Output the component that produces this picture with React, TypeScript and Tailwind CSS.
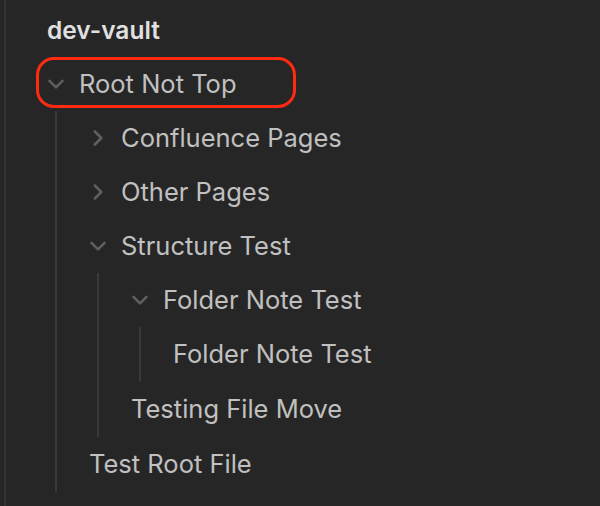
import React from "react";

type Node = {
  name: string;
  open?: boolean;
  highlight?: boolean;
  children?: Node[];
};

const tree: Node = {
  name: "Root Not Top",
  open: true,
  highlight: true,
  children: [
    { name: "Confluence Pages", children: [] },
    { name: "Other Pages", children: [] },
    {
      name: "Structure Test",
      open: true,
      children: [
        {
          name: "Folder Note Test",
          open: true,
          children: [{ name: "Folder Note Test" }],
        },
        { name: "Testing File Move" },
      ],
    },
    { name: "Test Root File" },
  ],
};

function Chevron({ open }: { open?: boolean }) {
  return (
    <svg
      width="18"
      height="18"
      viewBox="0 0 18 18"
      className={open ? "shrink-0" : "shrink-0 -rotate-90"}
      fill="none"
      stroke="#5f5f5f"
      strokeWidth="2.6"
      strokeLinecap="round"
      strokeLinejoin="round"
    >
      <path d="M2.5 5.8 L9 12.3 L15.5 5.8" />
    </svg>
  );
}

function TreeItem({ node }: { node: Node }) {
  const isFolder = node.children !== undefined;
  return (
    <div>
      <div className="relative flex items-center h-[54px]">
        {node.highlight && (
          <span className="absolute left-[-11px] top-0 w-[260px] h-[51px] rounded-[18px] border-[3px] border-[#ff2a12]" />
        )}
        {isFolder && <Chevron open={node.open} />}
        <span className={isFolder ? "ml-[14px] whitespace-nowrap" : "whitespace-nowrap"}>{node.name}</span>
      </div>
      {isFolder && node.open && node.children!.length > 0 && (
        <div className="ml-[8px] border-l-2 border-[#393939] pl-[32px] pb-[1px]">
          {node.children!.map((c, i) => (
            <TreeItem key={i} node={c} />
          ))}
        </div>
      )}
    </div>
  );
}

export default function App() {
  return (
    <div
      className="w-[600px] h-[506px] bg-[#262626] pl-[4px] overflow-hidden text-[#c0c0c0] text-[25.5px]"
      style={{ fontFamily: "Inter, 'Noto Sans', sans-serif" }}
    >
      <div className="h-full border-l-2 border-[#333333] pl-[41px]">
        <div className="h-[57px] pt-[4px] flex items-center font-semibold text-[#e0e0e0] text-[24.5px]">dev-vault</div>
        <TreeItem node={tree} />
      </div>
    </div>
  );
}
